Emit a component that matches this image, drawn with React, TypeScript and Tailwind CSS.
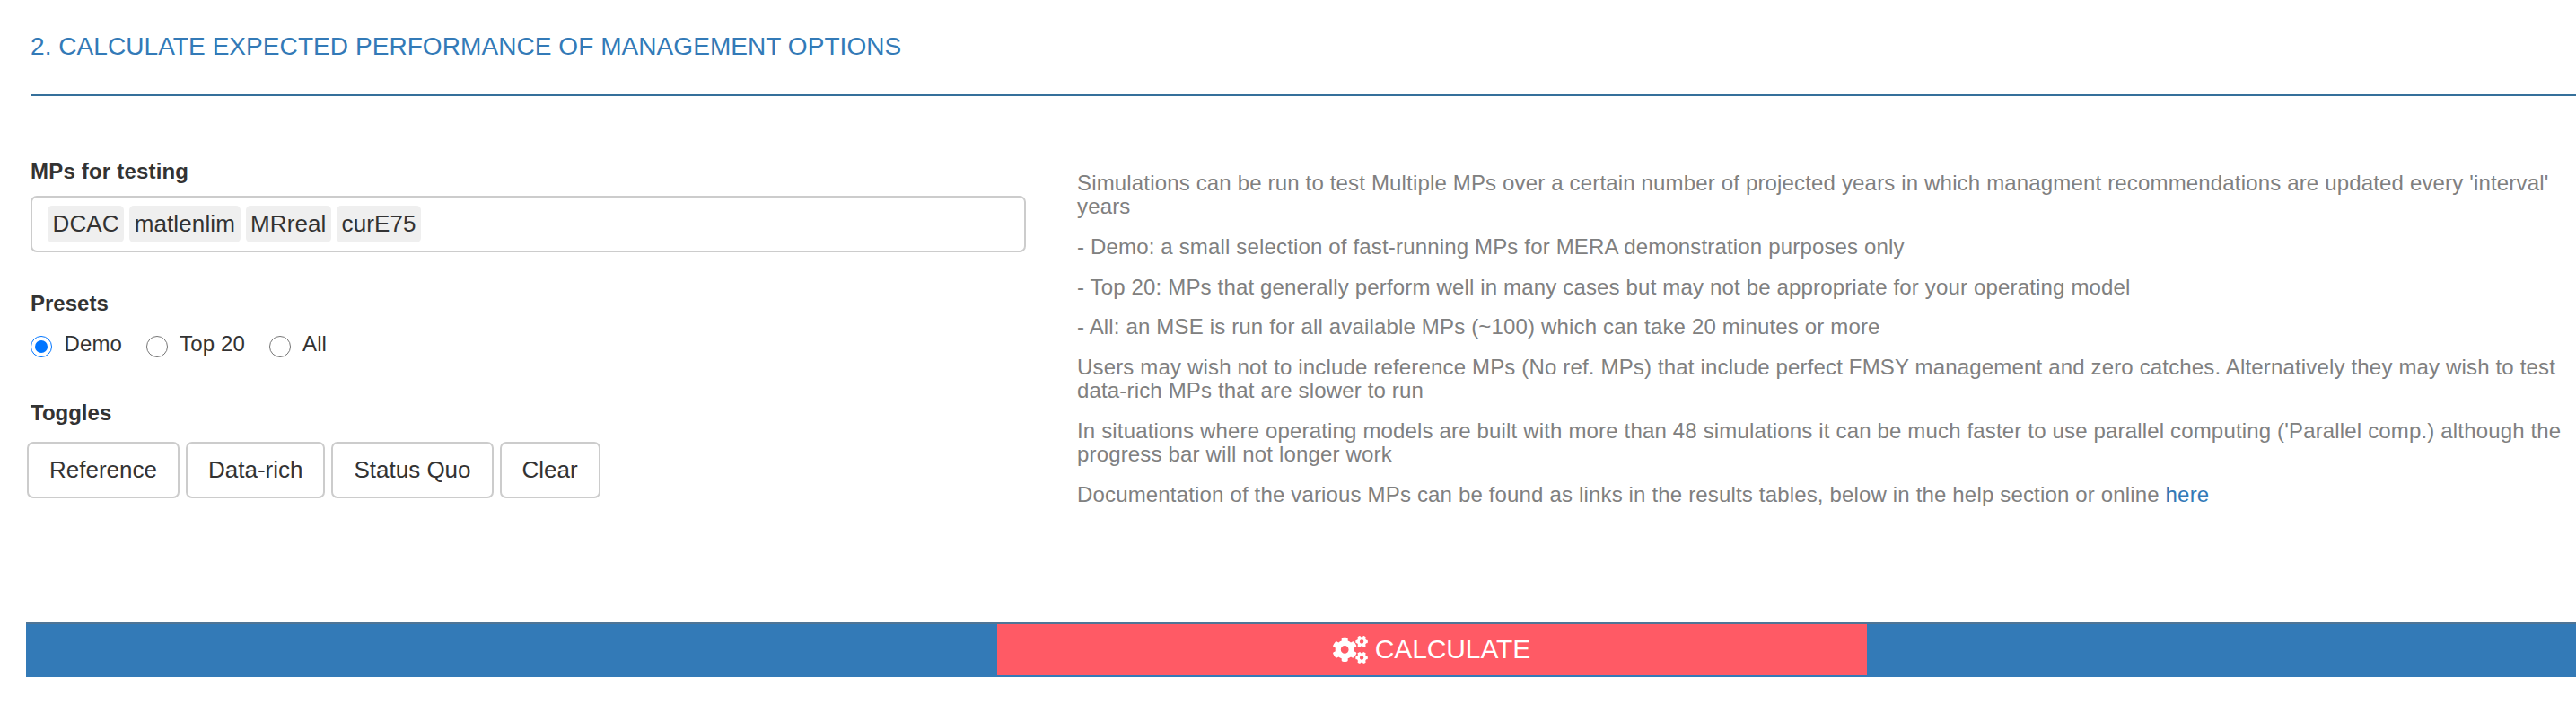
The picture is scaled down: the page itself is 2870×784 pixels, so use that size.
import { useState } from "react";
import { FaCogs } from "react-icons/fa";

const mps = ["DCAC", "matlenlim", "MRreal", "curE75"];
const presets = ["Demo", "Top 20", "All"];
const toggles = ["Reference", "Data-rich", "Status Quo", "Clear"];

export default function App() {
  const [preset, setPreset] = useState("Demo");
  return (
    <main className="h-[784px] w-full overflow-hidden bg-white font-['Liberation_Sans',Arial,sans-serif] text-[#333333]">
      <h4 className="ml-[34px] flex h-[107px] items-start border-b-2 border-[#35709b] pt-[36px] text-[28px] leading-[32px] tracking-[0.066px] text-[#337ab7]">
        2. CALCULATE EXPECTED PERFORMANCE OF MANAGEMENT OPTIONS
      </h4>

      <div className="flex h-[586px]">
        <section className="w-[1143px] shrink-0 pl-[34px] pt-[69px]">
          <h5 className="text-[24px] font-bold leading-[30px] tracking-[0.19px]">MPs for testing</h5>
          <div className="mt-3 flex h-[63px] items-center gap-[6px] rounded-[7px] border-2 border-[#cccccc] pl-[17px]">
            {mps.map((mp) => (
              <span key={mp} className="flex h-[41px] items-center rounded-[5px] bg-[#efefef] px-[5.5px] pb-[2px] text-[26px] leading-none tracking-[0.12px]">
                {mp}
              </span>
            ))}
          </div>

          <h5 className="mt-[42px] text-[24px] font-bold leading-[30px]">Presets</h5>
          <div className="mt-[16px] flex h-[30px] gap-[26.5px]">
            {presets.map((name) => (
              <label key={name} className="flex gap-[13.5px] text-[24px] leading-[28px] tracking-[0.14px]">
                <input
                  type="radio"
                  name="preset"
                  checked={preset === name}
                  onChange={() => setPreset(name)}
                  className="mt-[5px] size-6 appearance-none rounded-full border border-[#767676] bg-white bg-clip-content p-[4px] checked:border-[#0075ff] checked:bg-[#0075ff]"
                />
                {name}
              </label>
            ))}
          </div>

          <h5 className="mt-[46px] text-[24px] font-bold leading-[30px]">Toggles</h5>
          <div className="-ml-1 mt-[17px] flex gap-[7px]">
            {toggles.map((name) => (
              <button key={name} className="h-[63px] rounded-[7px] border-2 border-[#cccccc] px-[23px] pb-[2px] text-[26px] leading-none">
                {name}
              </button>
            ))}
          </div>
        </section>

        <section className="ml-[57px] flex w-[1670px] shrink-0 flex-col gap-[18.15px] pt-[84px] text-[24px] leading-[26.4px] tracking-[0.163px] text-[#808080]">
          <p>
            Simulations can be run to test Multiple MPs over a certain number of projected years in which managment recommendations are updated every 'interval'
            <br />
            years
          </p>
          <p>- Demo: a small selection of fast-running MPs for MERA demonstration purposes only</p>
          <p>- Top 20: MPs that generally perform well in many cases but may not be appropriate for your operating model</p>
          <p>- All: an MSE is run for all available MPs (~100) which can take 20 minutes or more</p>
          <p>
            Users may wish not to include reference MPs (No ref. MPs) that include perfect FMSY management and zero catches. Alternatively they may wish to test
            <br />
            data-rich MPs that are slower to run
          </p>
          <p>
            In situations where operating models are built with more than 48 simulations it can be much faster to use parallel computing ('Parallel comp.) although the
            <br />
            progress bar will not longer work
          </p>
          <p>
            Documentation of the various MPs can be found as links in the results tables, below in the help section or online{" "}
            <a href="#" className="text-[#337ab7]">here</a>
          </p>
        </section>
      </div>

      <div className="ml-[29px] flex h-[61px] border-t-2 border-[#4f7596] bg-[#337ab7] pb-[2px] pl-[1082px]">
        <button className="flex h-[57px] w-[969px] items-center justify-center gap-[8px] bg-[#ff5a65] pr-px pb-px text-[30px] leading-none tracking-[-0.12px] text-white">
          <FaCogs className="h-[31px] w-[39px]" />
          CALCULATE
        </button>
      </div>
    </main>
  );
}
